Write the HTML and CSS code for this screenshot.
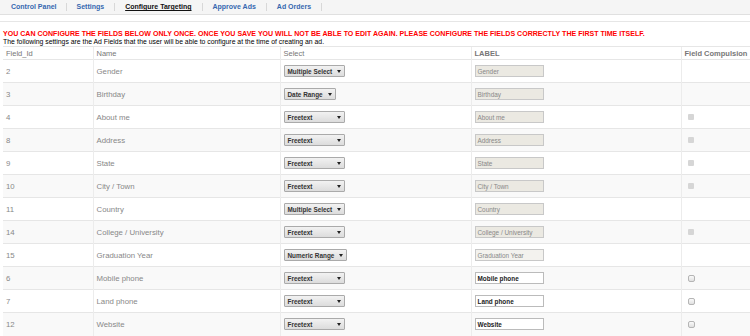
FILE: index.html
```html
<!DOCTYPE html>
<html>
<head>
<meta charset="utf-8">
<link rel="stylesheet" href="styles.css">
</head>
<body>
<div class="nav">
  <a class="tab">Control Panel</a>
  <a class="tab">Settings</a>
  <a class="tab active">Configure Targeting</a>
  <a class="tab">Approve Ads</a>
  <a class="tab">Ad Orders</a>
</div>
<div class="content">
  <div class="warn">YOU CAN CONFIGURE THE FIELDS BELOW ONLY ONCE. ONCE YOU SAVE YOU WILL NOT BE ABLE TO EDIT AGAIN. PLEASE CONFIGURE THE FIELDS CORRECTLY THE FIRST TIME ITSELF.</div>
  <div class="info">The following settings are the Ad Fields that the user will be able to configure at the time of creating an ad.</div>
  <table class="grid">
    <thead>
      <tr><th class="c1">Field_Id</th><th class="c2">Name</th><th class="c3">Select</th><th class="c4 b">LABEL</th><th class="c5 b">Field Compulsion</th></tr>
    </thead>
    <tbody>
      <tr><td>2</td><td>Gender</td><td><span class="sel w61">Multiple Select</span></td><td><span class="inp dis">Gender</span></td><td></td></tr>
      <tr><td>3</td><td>Birthday</td><td><span class="sel w51">Date Range</span></td><td><span class="inp dis">Birthday</span></td><td></td></tr>
      <tr><td>4</td><td>About me</td><td><span class="sel w61">Freetext</span></td><td><span class="inp dis">About me</span></td><td><span class="chk dis"></span></td></tr>
      <tr><td>8</td><td>Address</td><td><span class="sel w61">Freetext</span></td><td><span class="inp dis">Address</span></td><td><span class="chk dis"></span></td></tr>
      <tr><td>9</td><td>State</td><td><span class="sel w61">Freetext</span></td><td><span class="inp dis">State</span></td><td><span class="chk dis"></span></td></tr>
      <tr><td>10</td><td>City / Town</td><td><span class="sel w61">Freetext</span></td><td><span class="inp dis">City / Town</span></td><td><span class="chk dis"></span></td></tr>
      <tr><td>11</td><td>Country</td><td><span class="sel w61">Multiple Select</span></td><td><span class="inp dis">Country</span></td><td></td></tr>
      <tr><td>14</td><td>College / University</td><td><span class="sel w61">Freetext</span></td><td><span class="inp dis">College / University</span></td><td><span class="chk dis"></span></td></tr>
      <tr><td>15</td><td>Graduation Year</td><td><span class="sel w63">Numeric Range</span></td><td><span class="inp dis light">Graduation Year</span></td><td></td></tr>
      <tr><td>6</td><td>Mobile phone</td><td><span class="sel w61">Freetext</span></td><td><span class="inp">Mobile phone</span></td><td><span class="chk"></span></td></tr>
      <tr><td>7</td><td>Land phone</td><td><span class="sel w61">Freetext</span></td><td><span class="inp">Land phone</span></td><td><span class="chk"></span></td></tr>
      <tr><td>12</td><td>Website</td><td><span class="sel w61">Freetext</span></td><td><span class="inp">Website</span></td><td><span class="chk"></span></td></tr>
    </tbody>
  </table>
</div>
</body>
</html>
```

FILE: styles.css
```css
* { box-sizing: border-box; }
html, body { margin: 0; padding: 0; background: #fff; }
body { font-family: "Liberation Sans", Arial, sans-serif; color: #000; }

.nav {
  display: flex;
  align-items: center;
  height: 15px;
  background: #f5f5f5;
  border-bottom: 1px solid #e0e0e0;
}
.tab {
  display: block;
  font-size: 7px;
  font-weight: bold;
  color: #3568b0;
  padding: 0 10px 0 10px;
  line-height: 8px;
  border-right: 1px solid #d8d8d8;
}
.tab:first-child { padding-left: 11px; padding-right: 9px; }
.tab.active { color: #111; text-decoration: underline; }

.content {
  margin-top: 6px;
  border-top: 1px solid #e6e6e6;
  padding: 7px 0 0 3px;
}
.warn {
  color: #f00;
  font-weight: bold;
  font-size: 7.05px;
  line-height: 9px;
  white-space: nowrap;
}
.info {
  font-size: 6.85px;
  line-height: 8px;
  white-space: nowrap;
}

.grid {
  width: 760px;
  border-collapse: collapse;
  font-size: 7.8px;
}
.grid th {
  text-align: left;
  font-weight: normal;
  font-size: 7.5px;
  color: #777;
  height: 13px;
  padding: 0 0 0 3px;
  border-top: 1px solid #e6e6e6;
  border-left: 1px solid #ececec;
}
.grid th.b { font-weight: bold; }
.grid th:first-child, .grid td:first-child { border-left: none; }
.grid td {
  height: 23px;
  padding: 0 0 0 3px;
  color: #888;
  border-top: 1px solid #e6e6e6;
  border-left: 1px solid #ececec;
  vertical-align: middle;
}
.grid tbody tr:nth-child(even) td { background: #f9f9f9; }
.c1 { width: 90px; }
.c2 { width: 187px; }
.c3 { width: 191px; }
.c4 { width: 210px; }

.sel {
  display: inline-flex;
  align-items: center;
  justify-content: space-between;
  white-space: nowrap;
  height: 12px;
  padding: 0 3px;
  font-size: 6.4px;
  font-weight: bold;
  color: #333;
  background: linear-gradient(#f2f2f2, #dcdcdc);
  border: 1px solid #aaa;
  border-radius: 1px;
}
.sel::after {
  content: "";
  flex: none;
  border-left: 2px solid transparent;
  border-right: 2px solid transparent;
  border-top: 3.5px solid #222;
  margin-left: 4px;
}
.w61 { width: 61px; }
.w51 { width: 52px; }
.w63 { width: 63px; }

.inp {
  display: inline-flex;
  align-items: center;
  white-space: nowrap;
  width: 69px;
  height: 12px;
  padding-left: 2px;
  font-size: 6.4px;
  font-weight: bold;
  color: #222;
  background: #fff;
  border: 1px solid #bbb;
}
.inp.dis {
  background: #ebe9e2;
  color: #888;
  font-weight: normal;
  border-color: #c8c8c8;
}
.inp.light { background: #f3f2ee; }

.chk {
  display: inline-block;
  width: 6px;
  height: 6px;
  margin-left: 3px;
  border-radius: 1px;
  background: #d6d6d6;
  vertical-align: middle;
}
.chk:not(.dis) {
  width: 7px;
  height: 7px;
  background: linear-gradient(#fafafa, #e0e0e0);
  border: 1px solid #b5b5b5;
  border-radius: 2px;
}
```
